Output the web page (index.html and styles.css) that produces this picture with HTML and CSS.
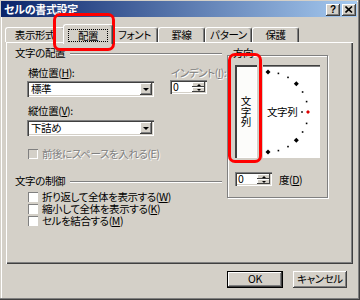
FILE: index.html
```html
<!DOCTYPE html>
<html lang="ja">
<head>
    <meta charset="UTF-8">
    <meta name="viewport" content="width=device-width, initial-scale=1.0">
    <title>セルの書式設定</title>
    <link rel="stylesheet" href="styles.css">
</head>
<body>
    <div class="dialog">
        <div class="titlebar">
            <span class="title">セルの書式設定</span>
            <span class="cap-btn help">?</span>
            <span class="cap-btn close">
                <svg width="8" height="7" viewBox="0 0 8 7"><path d="M0.5 0.5 L7 6.5 M7 0.5 L0.5 6.5" stroke="#000" stroke-width="1.6"/></svg>
            </span>
        </div>

        <div class="content">
            <div class="tabs">
                <div class="tab first">表示形式</div>
                <div class="tab active"><span class="focus">配置</span></div>
                <div class="tab">フォント</div>
                <div class="tab">罫線</div>
                <div class="tab">パターン</div>
                <div class="tab">保護</div>
            </div>

            <div class="panel">
                <div class="left">
                    <div class="group-head"><span>文字の配置</span></div>

                    <div class="align-row">
                        <div class="col-main">
                            <div class="label">横位置(<u>H</u>):</div>
                            <div class="combo"><span class="value">標準</span><span class="drop"></span></div>
                        </div>
                        <div class="col-indent">
                            <div class="label disabled">インデント(<u>I</u>):</div>
                            <div class="spin"><span class="num">0</span><span class="spin-btns"><i class="up"></i><i class="down"></i></span></div>
                        </div>
                    </div>
                    <div class="col-main">
                        <div class="label second">縦位置(<u>V</u>):</div>
                        <div class="combo combo-second"><span class="value">下詰め</span><span class="drop"></span></div>
                    </div>

                    <div class="check disabled first-check"><span class="box"></span>前後にスペースを入れる(E)</div>

                    <div class="group-head control-head"><span>文字の制御</span></div>
                    <div class="check wrap-check"><span class="box"></span>折り返して全体を表示する(<u>W</u>)</div>
                    <div class="check"><span class="box"></span>縮小して全体を表示する(<u>K</u>)</div>
                    <div class="check"><span class="box"></span>セルを結合する(<u>M</u>)</div>
                </div>

                <fieldset class="orient">
                    <legend>方向</legend>
                    <div class="orient-boxes">
                        <div class="vertical"><span>文字列</span></div>
                        <div class="dial">
                            <svg width="57" height="93" viewBox="0 0 57 93">
                                <g fill="#000">
                                    <polygon points="5,4.5 7.5,7 5,9.5 2.5,7"/>
                                    <rect x="14.6" y="7.6" width="1.6" height="1.6"/>
                                    <rect x="24.2" y="11.6" width="1.6" height="1.6"/>
                                    <polygon points="33.3,16.2 35.8,18.7 33.3,21.2 30.8,18.7"/>
                                    <rect x="38.8" y="26.2" width="1.6" height="1.6"/>
                                    <rect x="42.8" y="35.8" width="1.6" height="1.6"/>
                                    <rect x="38.2" y="46.2" width="1.6" height="1.6"/>
                                    <rect x="42.8" y="57.6" width="1.6" height="1.6"/>
                                    <rect x="38.8" y="66.2" width="1.6" height="1.6"/>
                                    <polygon points="33.3,72.8 35.8,75.3 33.3,77.8 30.8,75.3"/>
                                    <rect x="24.2" y="80.8" width="1.6" height="1.6"/>
                                    <rect x="14.6" y="84.8" width="1.6" height="1.6"/>
                                    <polygon points="5,84.5 7.5,87 5,89.5 2.5,87"/>
                                </g>
                                <polygon points="45,45 47,47 45,49 43,47" fill="#e00000"/>
                                <text x="4" y="51" class="dial-text">文字列</text>
                            </svg>
                        </div>
                    </div>
                    <div class="degree">
                        <div class="spin spin-deg"><span class="num">0</span><span class="spin-btns"><i class="up"></i><i class="down"></i></span></div>
                        <span class="label">度(<u>D</u>)</span>
                    </div>
                </fieldset>
            </div>

            <div class="buttons">
                <div class="btn default">OK</div>
                <div class="btn">キャンセル</div>
            </div>
        </div>

        <div class="mark mark-tab"></div>
        <div class="mark mark-orient"></div>
    </div>
</body>
</html>
```

FILE: styles.css
```css
* {
    box-sizing: border-box;
}

body {
    margin: 0;
    width: 360px;
    height: 300px;
    overflow: hidden;
    background-color: #d4d0c8;
    color: #000;
    font-family: "Noto Sans CJK JP", "Liberation Sans", sans-serif;
    font-size: 10.5px;
    line-height: 13px;
    letter-spacing: -0.4px;
    font-feature-settings: "palt";
}

u {
    text-decoration: underline;
    text-underline-offset: 1px;
}

.dialog {
    position: relative;
    width: 360px;
    height: 300px;
    padding: 1px 3px 3px 1px;
    box-shadow: inset -1px -1px #404040, inset -2px -2px #808080, inset 1px 1px #d4d0c8, inset 2px 2px #fff;
}

/* barra de titulo */
.titlebar {
    display: flex;
    align-items: center;
    height: 16px;
    padding-left: 3px;
    background: linear-gradient(to right, #0a246a, #a6caf0);
}

.title {
    flex: 1;
    color: #fff;
    font-size: 11px;
    font-weight: bold;
    letter-spacing: -0.3px;
}

.cap-btn {
    display: flex;
    align-items: center;
    justify-content: center;
    width: 14px;
    height: 12px;
    margin-top: 1px;
    background-color: #d4d0c8;
    box-shadow: inset -1px -1px #404040, inset 1px 1px #fff, inset -2px -2px #808080;
    font-family: "Liberation Sans", sans-serif;
    font-weight: bold;
    font-size: 10px;
    line-height: 10px;
    letter-spacing: 0;
}

.cap-btn.help {
    margin-right: 2px;
}

.cap-btn.close {
    margin-right: 1px;
}

.content {
    padding: 0 4px 0 5px;
}

/* abas */
.tabs {
    display: flex;
    align-items: flex-end;
    height: 18px;
    margin-top: 7px;
    margin-left: -1px;
}

.tab {
    width: 47px;
    height: 15px;
    border-left: 1px solid #fff;
    border-top: 1px solid #fff;
    border-right: 1px solid #404040;
    border-radius: 3px 3px 0 0;
    box-shadow: inset -1px 0 #808080;
    text-align: center;
    line-height: 13px;
}

.tab.first {
    width: 60px;
}

.tab.active {
    position: relative;
    z-index: 1;
    width: 50px;
    height: 20px;
    margin: 0 -2px -2px -2px;
    padding-top: 4px;
    background-color: #d4d0c8;
}

.focus {
    display: inline-block;
    padding: 0 9px;
    line-height: 11px;
    outline: 1px dotted #000;
}

/* painel */
.panel {
    display: flex;
    align-items: flex-start;
    height: 222px;
    padding: 4px 0 0 9px;
    box-shadow: inset 1px 1px #fff, inset -1px -1px #404040, inset -2px -2px #808080;
}

.left {
    width: 207px;
}

.group-head {
    display: flex;
    align-items: center;
    height: 13px;
}

.group-head::after {
    content: "";
    flex: 1;
    margin-left: 5px;
    margin-top: 2px;
    border-top: 1px solid #808080;
    border-bottom: 1px solid #fff;
}

.control-head {
    margin-top: 14px;
}

.align-row {
    display: flex;
    margin-top: 7px;
}

.col-main {
    width: 127px;
    margin-left: 12px;
}

.col-indent {
    width: 37px;
    margin-left: 16px;
}

.label {
    height: 13px;
    white-space: nowrap;
    margin-bottom: 2px;
    padding-left: 1px;
}

.col-indent .label {
    margin-bottom: 1px;
}

.label.second {
    margin-top: 7px;
    margin-bottom: 3px;
}

.disabled {
    color: #808080;
    text-shadow: 1px 1px #fff;
}

.combo {
    display: flex;
    align-items: center;
    height: 16px;
    padding: 2px 2px 2px 4px;
    background-color: #fff;
    box-shadow: inset 1px 1px #808080, inset 2px 2px #404040, inset -1px -1px #fff, inset -2px -2px #d4d0c8;
}

.combo .value {
    flex: 1;
    line-height: 12px;
}

.drop {
    display: flex;
    align-items: center;
    justify-content: center;
    width: 12px;
    height: 12px;
    background-color: #d4d0c8;
    box-shadow: inset -1px -1px #404040, inset 1px 1px #fff, inset -2px -2px #808080;
}

.drop::before {
    content: "";
    border-left: 3px solid transparent;
    border-right: 3px solid transparent;
    border-top: 3px solid #000;
}

.spin {
    display: flex;
    width: 37px;
    height: 14px;
    padding: 2px;
    background-color: #fff;
    box-shadow: inset 1px 1px #808080, inset 2px 2px #404040, inset -1px -1px #fff, inset -2px -2px #d4d0c8;
}

.spin .num {
    flex: 1;
    padding-left: 1px;
    line-height: 10px;
}

.spin-btns {
    display: flex;
    flex-direction: column;
    width: 13px;
}

.spin-btns i {
    flex: 1;
    display: flex;
    align-items: center;
    justify-content: center;
    background-color: #d4d0c8;
    box-shadow: inset -1px -1px #404040, inset 1px 1px #fff;
}

.spin-btns .up::before {
    content: "";
    border-left: 2px solid transparent;
    border-right: 2px solid transparent;
    border-bottom: 2px solid #000;
}

.spin-btns .down::before {
    content: "";
    border-left: 2px solid transparent;
    border-right: 2px solid transparent;
    border-top: 2px solid #000;
}

/* caixas de selecao */
.check {
    display: flex;
    align-items: center;
    height: 12px;
    line-height: 12px;
    margin-left: 13px;
    white-space: nowrap;
}

.first-check {
    height: 13px;
    margin-top: 11px;
}

.wrap-check {
    margin-top: 4px;
}

.box {
    width: 10px;
    height: 10px;
    margin-right: 4px;
    background-color: #fff;
    box-shadow: inset 1px 1px #808080, inset -1px -1px #fff;
}

.check.disabled .box {
    background-color: #d4d0c8;
}

/* grupo de orientacao */
.orient {
    width: 101px;
    margin: 0 0 0 5px;
    padding: 1px 6px 11px 7px;
    border: 1px solid #808080;
    box-shadow: inset 1px 1px #fff, 1px 1px #fff;
    min-width: 0;
}

.orient legend {
    margin-left: -3px;
    padding: 0 1px 5px 1px;
    line-height: 13px;
    background-color: #d4d0c8;
}

.orient-boxes {
    display: flex;
    gap: 6px;
}

.vertical {
    display: flex;
    align-items: center;
    justify-content: center;
    width: 22px;
    height: 93px;
    background-color: #fcfcfa;
    box-shadow: inset 1px 1px #404040, inset 2px 2px #404040, inset -1px -1px #fff;
}

.vertical span {
    writing-mode: vertical-rl;
    font-size: 10.5px;
    line-height: 11px;
    letter-spacing: 0;
    font-feature-settings: normal;
}

.dial {
    width: 57px;
    height: 93px;
    background-color: #fff;
    box-shadow: inset 0 1px #404040, inset 0 2px #808080;
}

.dial svg {
    display: block;
}

.dial-text {
    font-family: "Noto Sans CJK JP", sans-serif;
    font-size: 10.5px;
}

.degree {
    display: flex;
    align-items: center;
    margin-top: 14px;
}

.degree .label {
    margin: 0 0 0 6px;
}

/* botoes */
.buttons {
    display: flex;
    justify-content: flex-end;
    gap: 10px;
    margin-top: 7px;
    padding-right: 6px;
}

.btn {
    width: 54px;
    height: 17px;
    background-color: #d4d0c8;
    box-shadow: inset -1px -1px #404040, inset 1px 1px #fff, inset -2px -2px #808080;
    text-align: center;
    line-height: 16px;
}

.btn.default {
    width: 56px;
    border: 1px solid #000;
    line-height: 14px;
}

/* destaques vermelhos */
.mark {
    position: absolute;
    border: 3px solid #f00;
    border-radius: 7px;
}

.mark-tab {
    left: 53px;
    top: 13px;
    width: 62px;
    height: 38px;
}

.mark-orient {
    left: 228px;
    top: 53px;
    width: 34px;
    height: 110px;
}
```
